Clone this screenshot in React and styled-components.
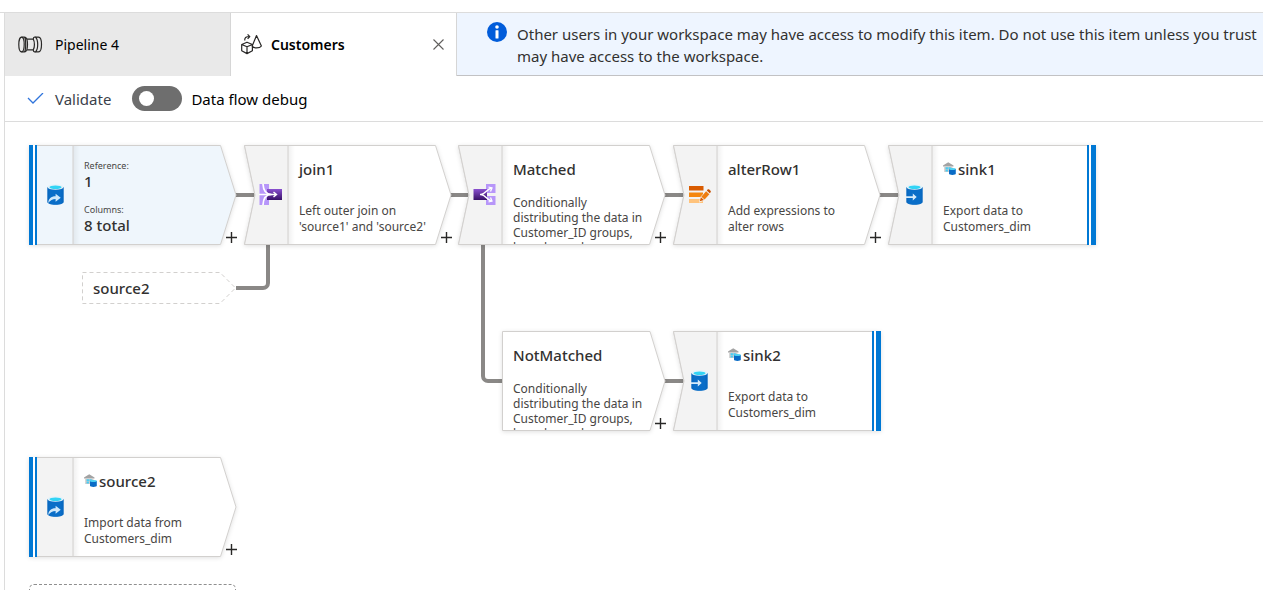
import React from 'react';
import styled, { createGlobalStyle, css } from 'styled-components';

const GlobalStyle = createGlobalStyle`
  * { box-sizing: border-box; }
  body {
    margin: 0;
    background: #fff;
    color: #1b1a19;
    font-family: "Noto Sans", "Open Sans", sans-serif;
    font-size: 15px;
  }
  button, input { font: inherit; color: inherit; }
  h3, p, dl, dt, dd { margin: 0; }
`;

const Page = styled.div`
  display: flex;
  flex-direction: column;
  height: 100vh;
  padding-top: 12px;
  overflow: hidden;
`;

const Frame = styled.div`
  border-top: 1px solid #dcdcdc;
  padding-left: 4px;
  flex: 1;
  min-height: 0;
  display: flex;
`;

const Workspace = styled.main`
  border-left: 1px solid #dcdcdc;
  flex: 1;
  min-width: 0;
  display: flex;
  flex-direction: column;
`;

const TopBar = styled.header`
  display: flex;
  height: 63px;
  flex: none;
`;

const Tab = styled.div`
  display: flex;
  align-items: center;
  width: 226px;
  flex: none;
  padding: 0 12px 0 10px;
  border-right: 1px solid #d6d6d6;
  background: ${(p) => (p.$active ? '#fff' : '#e9e9e9')};
`;

const TabButton = styled.button`
  display: flex;
  align-items: center;
  flex: 1;
  gap: ${(p) => (p.$active ? '8px' : '11px')};
  height: 100%;
  padding: 0;
  border: 0;
  background: none;
  color: #000;
  font-size: 14px;
  font-weight: ${(p) => (p.$active ? 600 : 400)};
  text-align: left;
`;

const IconButton = styled.button`
  display: flex;
  padding: 0;
  border: 0;
  background: none;
`;

const Banner = styled.aside`
  display: flex;
  align-items: flex-start;
  gap: 10px;
  flex: 1;
  min-width: 0;
  overflow: hidden;
  padding: 9px 0 0 30px;
  background: #eef5ff;
  border-bottom: 1px solid #c2c2c4;
  svg { flex: none; }
`;

const BannerText = styled.p`
  padding-top: 1px;
  color: #323130;
  font-size: 15px;
  line-height: 22px;
  white-space: nowrap;
`;

const Toolbar = styled.div`
  display: flex;
  align-items: center;
  gap: 21px;
  height: 46px;
  flex: none;
  padding-left: 22px;
  border-bottom: 1px solid #dcdcdc;
`;

const ToolButton = styled.button`
  display: flex;
  align-items: center;
  gap: 11px;
  padding: 0;
  border: 0;
  background: none;
  color: #3b3f4a;
  font-size: 15px;
`;

const SwitchLabel = styled.label`
  display: flex;
  align-items: center;
  gap: 9px;
  color: #000;
  font-size: 15px;
`;

const Switch = styled.input`
  appearance: none;
  display: flex;
  align-items: center;
  width: 50px;
  height: 25px;
  margin: 0;
  padding-left: 7px;
  border-radius: 13px;
  background: #6e6e6e;
  &::before {
    content: '';
    width: 15px;
    height: 15px;
    border-radius: 50%;
    background: #fff;
  }
`;

const Canvas = styled.section`
  position: relative;
  flex: 1;
  min-height: 0;
  overflow: hidden;
`;

const Edges = styled.svg`
  position: absolute;
  left: 0;
  top: 0;
  width: 1100px;
  height: 460px;
  fill: none;
  stroke: #8a8886;
  stroke-width: 4;
`;

const place = css`
  position: absolute;
  left: ${(p) => p.$x}px;
  top: ${(p) => p.$y}px;
`;

const NodeCard = styled.article`
  ${place}
  display: flex;
  width: ${(p) => p.$w}px;
  height: 100px;
`;

const Outline = styled.svg`
  position: absolute;
  inset: 0;
  overflow: visible;
  filter: drop-shadow(0 1px 2px rgba(0, 0, 0, 0.12));
`;

const Pane = styled.div`
  position: relative;
  display: flex;
  align-items: center;
  justify-content: flex-end;
  width: 44px;
  padding-bottom: 2px;
  padding-right: ${(p) => (p.$wide ? '6px' : '9px')};
`;

const Body = styled.div`
  position: relative;
  display: flex;
  flex-direction: column;
  gap: ${(p) => (p.$dense ? '16px' : '24px')};
  flex: 1;
  min-width: 0;
  height: 99px;
  padding: 14px 0 0 11px;
  overflow: hidden;
`;

const NodeTitle = styled.h3`
  display: flex;
  align-items: center;
  gap: 2px;
  flex: none;
  color: #323130;
  font-size: 15px;
  font-weight: 500;
  line-height: 20px;
`;

const NodeText = styled.p`
  color: #484644;
  font-size: 12px;
  line-height: ${(p) => (p.$dense ? '15px' : '16px')};
  white-space: nowrap;
`;

const Stats = styled.dl`
  color: #323130;
  dt { font-size: 9px; line-height: 14px; color: #484644; }
  dd { font-size: 15px; font-weight: 500; line-height: 16px; }
  dd + dt { margin-top: 14px; }
`;

const AddButton = styled.button`
  position: absolute;
  left: ${(p) => p.$x}px;
  top: 87px;
  display: flex;
  padding: 0;
  border: 0;
  background: none;
`;

const ReferenceNode = styled.div`
  ${place}
  display: flex;
  align-items: center;
  width: 154px;
  height: 31px;
  padding-left: 11px;
  svg { position: absolute; inset: 0; overflow: visible; }
`;

const AddSource = styled.button`
  ${place}
  width: 207px;
  height: 60px;
  border: 1px dashed #8f8f8f;
  border-radius: 5px;
  background: #fff;
`;

const PipelineIcon = () => (
  <svg width="29" height="20" viewBox="0 0 29 20" fill="none" stroke="#292827" strokeWidth="1.200">
    <ellipse cx="6.500" cy="9.500" rx="2.700" ry="7.300" />
    <path d="M6.500 2.200h3c2.300 0 3 4 3 7.300s-.7 7.300-3 7.300h-3M9.500 2.200c.8 1 1.200 4 1.200 7.300s-.4 6.300-1.200 7.300" />
    <path d="M12 4.200h6.500M12 14.800h6.500" />
    <path d="M21 2.200h-1.500c-.8 0-1.200 1-1.200 2 1.500 2.500 1.500 8 0 10.600 0 1 .4 2 1.200 2H21" />
    <path d="M20.500 2.200h3c2 0 3 3.300 3 7.300s-1 7.300-3 7.300h-3M20.500 2.200c1.600 1.400 2.200 4 2.200 7.300s-.6 6-2.200 7.300" />
  </svg>
);

const DataflowIcon = () => (
  <svg width="22" height="22" viewBox="0 0 22 22" fill="none" stroke="#292827" strokeWidth="1.200" strokeLinejoin="round">
    <path d="M.700 10.500l5.300-2.300 5.400 2.300v6.300L6 19.600l-5.300-2.800zM.700 10.500L6 12.800l5.400-2.300M6 12.800v6.800" />
    <path d="M15.500 1.500l-4.300 10.500c1 2.600 7.600 2.600 9.200 0zM3.800 6.500c-.3-2.700 1-4 4.800-4M6.600.400l2.200 2.200-2.200 2.300" />
  </svg>
);

const CloseIcon = () => (
  <svg width="11" height="11" viewBox="0 0 11 11" stroke="#605e5c" strokeWidth="1.100">
    <path d="M.500.500l10 10M10.500.500l-10 10" />
  </svg>
);

const InfoIcon = () => (
  <svg width="20" height="20" viewBox="0 0 20 20">
    <circle cx="10" cy="10" r="10" fill="#015cda" />
    <circle cx="10" cy="5" r="1.800" fill="#fff" />
    <rect x="8.500" y="8.300" width="3" height="8.200" rx=".5" fill="#fff" />
  </svg>
);

const CheckIcon = () => (
  <svg width="17" height="12" viewBox="0 0 17 12" fill="none" stroke="#2f74dc" strokeWidth="1.300">
    <path d="M1 5l5 5L16 0" />
  </svg>
);

const PlusIcon = () => (
  <svg width="11" height="11" viewBox="0 0 11 11" stroke="#292827" strokeWidth="1.400">
    <path d="M5.500 0v11M0 5.500h11" />
  </svg>
);

const Cylinder = ({ children }) => (
  <svg width="17" height="21" viewBox="0 0 17 21">
    <path d="M.300 3v15c0 1.600 3.600 2.800 8.200 2.800s8.200-1.200 8.200-2.800V3z" fill="#0868c0" />
    <path d="M2.500 4v15.800c1.500.6 3.800 1 6 1s4.500-.4 6-1V4z" fill="#0b74d0" opacity=".5" />
    <ellipse cx="8.500" cy="3" rx="8.200" ry="2.800" fill="#e4f2fa" />
    <ellipse cx="8.500" cy="3.200" rx="6" ry="1.800" fill="#32d4f5" />
    {children}
  </svg>
);

const SourceIcon = () => (
  <Cylinder>
    <path d="M1.200 19c.3-4.500 2.800-6.800 7.400-6.800V9.700l5.100 4.100-5.100 4v-2.800c-3 0-5.200 1.200-7.400 4z" fill="#cfe8fa" />
  </Cylinder>
);

const SinkIcon = () => (
  <Cylinder>
    <path d="M0 12.200h6.800V9.500l3.900 3.500-3.900 3.500v-2.500H0z" fill="#d6ebfa" />
  </Cylinder>
);

const JoinIcon = () => (
  <svg width="23" height="21" viewBox="0 0 23 21">
    <defs>
      <linearGradient id="joinFill" x1="0" y1="0" x2="0" y2="1">
        <stop offset="0" stopColor="#8a50d0" />
        <stop offset="1" stopColor="#371066" />
      </linearGradient>
    </defs>
    <path d="M.500 0H10v21H.500z" fill="#b796f9" />
    <path d="M8 5h15v11H8z" fill="url(#joinFill)" />
    <path d="M0 10.500h17M14.500 8l3 2.500-3 2.500" fill="none" stroke="#fff" strokeWidth="1.400" />
    <path d="M4 0c.3 6 3 10.500 8.500 10.500M4 21c.3-6 3-10.500 8.500-10.500" fill="none" stroke="#fff" strokeWidth="1.700" />
  </svg>
);

const SplitIcon = () => (
  <svg width="23" height="21" viewBox="0 0 23 21">
    <defs>
      <linearGradient id="splitFill" x1="0" y1="0" x2="0" y2="1">
        <stop offset="0" stopColor="#8a50d0" />
        <stop offset="1" stopColor="#371066" />
      </linearGradient>
    </defs>
    <path d="M13 0h9.500v9H13zM13 12h9.500v9H13z" fill="#b796f9" />
    <path d="M.500 5H14v11H.500z" fill="url(#splitFill)" />
    <path d="M7 10.500h3M8 10.500c4.500-.5 6-5.500 10.500-6.500M8 10.500c4.500.5 6 5.500 10.500 6.500" fill="none" stroke="#fff" strokeWidth="1.500" />
    <path d="M15.500 3l3.500 1-1.500 3.500M15.500 18l3.500-1-1.500-3.500" fill="none" stroke="#fff" strokeWidth="1.300" />
  </svg>
);

const AlterIcon = () => (
  <svg width="23" height="19" viewBox="0 0 23 19">
    <path d="M1 1h14.500v4.500H1z" fill="#d95b00" />
    <path d="M1 7.500h14v4.500H1z" fill="#f5870f" />
    <path d="M1 14h14v4H1z" fill="#ffc37c" />
    <path d="M11 17.500l1.400-5.500 7-8 4 3.600-7 8z" fill="#f3f3f3" />
    <path d="M13.300 11.700l4.800-5.400 3.300 2.900-4.800 5.300z" fill="#ee7d10" />
    <path d="M18.800 5.600l.9-1c.5-.5 1-.5 1.500-.1l1.300 1.200c.5.500.5 1 .1 1.500l-.8 1z" fill="#c75100" />
    <path d="M12.900 12.300l3 2.700-4.100 1.300z" fill="#d95b00" />
  </svg>
);

const LakehouseIcon = () => (
  <svg width="13" height="14" viewBox="0 0 13 14">
    <path d="M0 3.400L5.200.300 10.500 3.400v1.100H0z" fill="#a3a3a3" />
    <path d="M1.200 4.500h8.200V10H1.200z" fill="#ccc" />
    <path d="M2.600 5.200h2.300v2H2.600zM5.500 5.200h2.300v2H5.500zM2.600 7.800h2.300v1.800H2.600z" fill="#45cdf5" />
    <path d="M6 7v4.700c0 .7 1.500 1.200 3.400 1.200s3.400-.5 3.400-1.200V7z" fill="#0a6cc6" />
    <ellipse cx="9.400" cy="7" rx="3.400" ry="1" fill="#4bd0f2" />
  </svg>
);

const icons = { source: SourceIcon, sink: SinkIcon, join: JoinIcon, split: SplitIcon, alter: AlterIcon };

const shapes = {
  source: { outline: 'M.5 .5H191.500L207 50 191.500 99.500H.5z', pane: 'M.5 .5H44V99.500H.5z' },
  step: { outline: 'M.5 .5H191.500L207 50 191.500 99.500H.5L11 50z', pane: 'M.5 .5H44V99.500H.5L11 50z' },
  sink: { outline: 'M.5 .5H207V99.500H.5L11 50z', pane: 'M.5 .5H44V99.500H.5L11 50z' },
  branch: { outline: 'M.5 .5H148L163 50 148 99.500H.5z' },
};

function FlowNode({ x, y, shape, icon, title, dataset, lines, stats, selected }) {
  const { outline, pane } = shapes[shape];
  const width = pane ? 207 : 163;
  const Icon = icons[icon];
  const dense = lines && lines.length > 2;
  const paneFill = selected ? '#eff6fc' : '#f3f3f3';
  return (
    <NodeCard $x={x} $y={y} $w={width}>
      <Outline width={width} height="100" aria-hidden="true">
        <path d={outline} fill={selected ? '#eff6fc' : '#fff'} stroke="#d2d0ce" />
        {pane && <path d="M44 1h7v98h-7z" fill="url(#paneShade)" />}
        {pane && <path d={pane} fill={paneFill} stroke="#d2d0ce" />}
        {shape === 'source' && <path d="M0 0h8v100H0z" fill="#fff" />}
        {shape === 'source' && <path d="M0 0h4v100H0zM6 0h2v100H6z" fill="#0078d4" />}
        {shape === 'sink' && <path d="M199 0h9v100h-9z" fill="#fff" />}
        {shape === 'sink' && <path d="M199 0h2v100h-2zM203 0h5v100h-5z" fill="#0078d4" />}
      </Outline>
      {pane && (
        <Pane $wide={icon === 'join' || icon === 'split' || icon === 'alter'}>
          <Icon />
        </Pane>
      )}
      <Body $dense={dense}>
        {title && (
          <NodeTitle>
            {dataset && <LakehouseIcon />}
            {title}
          </NodeTitle>
        )}
        {lines && (
          <NodeText $dense={dense}>
            {lines.map((line, i) => (
              <React.Fragment key={line}>
                {i > 0 && <br />}
                {line}
              </React.Fragment>
            ))}
          </NodeText>
        )}
        {stats && (
          <Stats>
            {stats.map(([name, value]) => (
              <React.Fragment key={name}>
                <dt>{name}</dt>
                <dd>{value}</dd>
              </React.Fragment>
            ))}
          </Stats>
        )}
      </Body>
      {shape !== 'sink' && (
        <AddButton type="button" aria-label="Add step" $x={width - 10}>
          <PlusIcon />
        </AddButton>
      )}
    </NodeCard>
  );
}

const splitLines = ['Conditionally', 'distributing the data in', 'Customer_ID groups,', 'based on columns'];

const nodes = [
  { id: 'source1', x: 24, y: 23, shape: 'source', icon: 'source', selected: true, stats: [['Reference:', '1'], ['Columns:', '8 total']] },
  { id: 'join1', x: 239, y: 23, shape: 'step', icon: 'join', title: 'join1', lines: ['Left outer join on', "'source1' and 'source2'"] },
  { id: 'matched', x: 453, y: 23, shape: 'step', icon: 'split', title: 'Matched', lines: splitLines },
  { id: 'alter', x: 668, y: 23, shape: 'step', icon: 'alter', title: 'alterRow1', lines: ['Add expressions to', 'alter rows'] },
  { id: 'sink1', x: 883, y: 23, shape: 'sink', icon: 'sink', title: 'sink1', dataset: true, lines: ['Export data to', 'Customers_dim'] },
  { id: 'notMatched', x: 497, y: 209, shape: 'branch', title: 'NotMatched', lines: splitLines },
  { id: 'sink2', x: 668, y: 209, shape: 'sink', icon: 'sink', title: 'sink2', dataset: true, lines: ['Export data to', 'Customers_dim'] },
  { id: 'source2', x: 24, y: 335, shape: 'source', icon: 'source', title: 'source2', dataset: true, lines: ['Import data from', 'Customers_dim'] },
];

export default function App() {
  return (
    <Page>
      <GlobalStyle />
      <Frame>
        <Workspace>
          <TopBar>
            <Tab>
              <TabButton type="button">
                <PipelineIcon />
                Pipeline 4
              </TabButton>
            </Tab>
            <Tab $active>
              <TabButton type="button" $active>
                <DataflowIcon />
                Customers
              </TabButton>
              <IconButton type="button" aria-label="Close tab">
                <CloseIcon />
              </IconButton>
            </Tab>
            <Banner>
              <InfoIcon />
              <BannerText>
                Other users in your workspace may have access to modify this item. Do not use this item unless you trust
                <br />
                may have access to the workspace.
              </BannerText>
            </Banner>
          </TopBar>
          <Toolbar>
            <ToolButton type="button">
              <CheckIcon />
              Validate
            </ToolButton>
            <SwitchLabel htmlFor="debug">
              <Switch id="debug" type="checkbox" role="switch" />
              Data flow debug
            </SwitchLabel>
          </Toolbar>
          <Canvas>
            <Edges aria-hidden="true">
              <defs>
                <linearGradient id="paneShade">
                  <stop offset="0" stopColor="#000" stopOpacity=".06" />
                  <stop offset="1" stopColor="#000" stopOpacity="0" />
                </linearGradient>
              </defs>
              <path d="M231 73h20M446 73h20M660 73h20M875 73h20M660 259h20" />
              <path d="M231 166h27a5 5 0 0 0 5-5V123" />
              <path d="M478 123V254a5 5 0 0 0 5 5h15" />
            </Edges>
            {nodes.map(({ id, ...node }) => (
              <FlowNode key={id} {...node} />
            ))}
            <ReferenceNode $x={77} $y={150}>
              <svg width="154" height="32" fill="none" stroke="#d2d0ce" strokeDasharray="4 3" aria-hidden="true">
                <path d="M.500 .500H138L153.500 16 138 31.500H.500z" />
              </svg>
              <NodeTitle>source2</NodeTitle>
            </ReferenceNode>
            <AddSource type="button" aria-label="Add source" $x={24} $y={462} />
          </Canvas>
        </Workspace>
      </Frame>
    </Page>
  );
}
